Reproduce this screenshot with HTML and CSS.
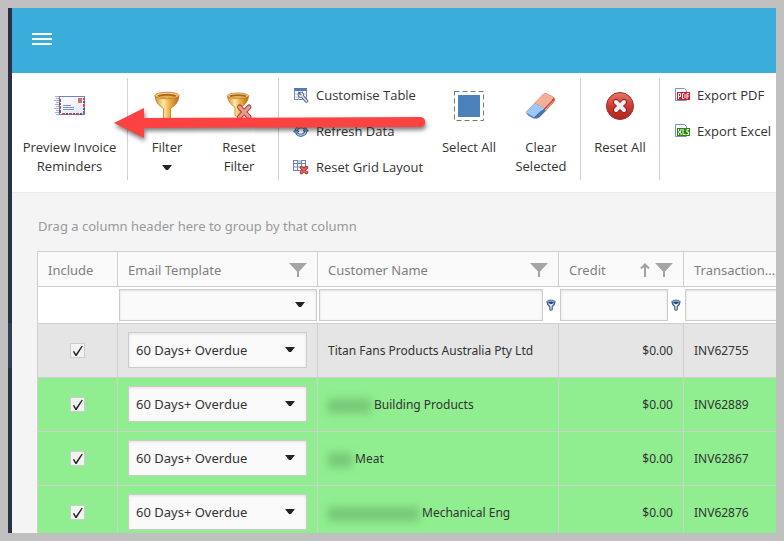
FILE: index.html
```html
<!DOCTYPE html>
<html lang="en">
<head>
    <meta charset="UTF-8">
    <meta name="viewport" content="width=device-width, initial-scale=1.0">
    <title>Invoice Reminders</title>
    <link rel="stylesheet" href="styles.css">
</head>
<body>
    <!-- shared icons -->
    <svg class="sprite" aria-hidden="true">
        <defs>
            <linearGradient id="gold" x1="0" x2="1" y1="0" y2="0">
                <stop offset="0" stop-color="#d58a2a"/>
                <stop offset="0.35" stop-color="#ffe9a6"/>
                <stop offset="0.6" stop-color="#eeb04a"/>
                <stop offset="1" stop-color="#b9690f"/>
            </linearGradient>
            <linearGradient id="red" x1="0" x2="0" y1="0" y2="1">
                <stop offset="0" stop-color="#e8796c"/>
                <stop offset="0.5" stop-color="#cf3a2d"/>
                <stop offset="1" stop-color="#b3241b"/>
            </linearGradient>
            <linearGradient id="paper" x1="0" x2="1" y1="0" y2="1">
                <stop offset="0" stop-color="#ffffff"/>
                <stop offset="1" stop-color="#dfe6f5"/>
            </linearGradient>
            <symbol id="goblet" viewBox="0 0 32 32">
                <path d="M4 5.500C4 11 7.500 15.500 12.500 18.500V28C14 29.500 18 29.500 19.500 28V18.500C24.500 15.500 28 11 28 5.500z" fill="url(#gold)" stroke="#b97a2a" stroke-width="0.800"/>
                <ellipse cx="16" cy="5.500" rx="12" ry="3.300" fill="#f9d58a" stroke="#b5752a" stroke-width="0.800"/>
                <ellipse cx="16" cy="5.800" rx="9.800" ry="2" fill="#a9671c"/>
                <path d="M8 6.800C12 8.300 20 8.300 24 6.800C20 5.300 12 5.300 8 6.800z" fill="#e8ad50"/>
            </symbol>
            <symbol id="funnel" viewBox="0 0 18 14">
                <path d="M0 0H18L10 8.500V14H8V8.500z" fill="#a4a4a4"/>
            </symbol>
            <symbol id="mini-funnel" viewBox="0 0 10 12">
                <path d="M1 3C1 5 2.500 6.500 3.800 7.500V10.500C4.300 11.500 5.700 11.500 6.200 10.500V7.500C7.500 6.500 9 5 9 3z" fill="#eef3f9" stroke="#3c5c88" stroke-width="1.200"/>
                <ellipse cx="5" cy="2.700" rx="4" ry="1.700" fill="#7f9cc2" stroke="#44648f" stroke-width="0.800"/>
                <path d="M2.500 3H7.500L5 5.500z" fill="#1f4478"/>
            </symbol>
            <symbol id="caret" viewBox="0 0 10 5">
                <path d="M0 0H10L6 5H4z" fill="#222"/>
            </symbol>
        </defs>
    </svg>

    <div class="app">
        <nav class="sidebar"><span class="sidebar-active"></span></nav>
        <div class="page">
            <header class="topbar">
                <button type="button" class="menu-button" aria-label="Menu"><i></i><i></i><i></i></button>
            </header>

            <div class="toolbar">
                <div class="group">
                    <button type="button" class="tool tool-wide">
                        <svg class="icon" viewBox="0 0 32 32">
                            <path d="M1 6.500H5M2 8.500H5M0 10.500H5M2 12.500H5M1 14.500H5M2 16.500H5M0 18.500H5M2 20.500H5M1 22.500H5M2 24.500H5" stroke="#a3b0d0" stroke-width="1"/>
                            <rect x="5.500" y="6.500" width="25" height="18" fill="url(#paper)" stroke="#6b84c0"/>
                            <path d="M6 9V12M6 16V19M8 24H11M15 24H18M22 24H25M30 21V24M30 14V17M30 8V10" stroke="#cf4a3f" stroke-width="2"/>
                            <path d="M6 13V15M6 20V23M12 24H14M19 24H21M26 24H28M30 18V20M30 11V13" stroke="#3f5fa8" stroke-width="2"/>
                            <rect x="24" y="8" width="4" height="5" fill="#dd6a5f"/>
                            <path d="M9 15.500H17M9 17.500H20M9 19.500H20" stroke="#7b93c6"/>
                        </svg>
                        <span>Preview Invoice Reminders</span>
                    </button>
                </div>

                <div class="group">
                    <button type="button" class="tool">
                        <svg class="icon"><use href="#goblet"/></svg>
                        <span>Filter</span>
                        <svg class="caret tool-caret"><use href="#caret"/></svg>
                    </button>
                    <button type="button" class="tool">
                        <svg class="icon" viewBox="0 0 32 32">
                            <use href="#goblet" x="1" y="1" width="28" height="28"/>
                            <path d="M16.500 17L26 27M26 17L16.500 27" stroke="#b5443a" stroke-width="5" stroke-linecap="round"/>
                            <path d="M16.500 17L26 27M26 17L16.500 27" stroke="#e79a8e" stroke-width="3" stroke-linecap="round"/>
                        </svg>
                        <span>Reset Filter</span>
                    </button>
                </div>

                <div class="group">
                    <div class="tool-list">
                        <button type="button" class="tool-small">
                            <svg class="icon-small" viewBox="0 0 16 16">
                                <rect x="1.500" y="1.500" width="12" height="11" fill="#fff" stroke="#7088b8"/>
                                <rect x="1" y="1" width="13" height="3" fill="#5a78b0"/>
                                <path d="M1 7H14M1 10H14M5.500 4V13M9.500 4V13" stroke="#9db0d4" stroke-width="0.800"/>
                                <path d="M9 9L13.500 14" stroke="#5a6678" stroke-width="3.500" stroke-linecap="round"/>
                                <circle cx="7.800" cy="7.800" r="2.800" fill="#dfe5ee" stroke="#5a6678"/>
                                <path d="M9 9L13.500 14" stroke="#d3dae5" stroke-width="1.800" stroke-linecap="round"/>
                                <path d="M5.500 5.500L7.800 7.800" stroke="#5a6678" stroke-width="1.600"/>
                            </svg>
                            Customise Table
                        </button>
                        <button type="button" class="tool-small">
                            <svg class="icon-small" viewBox="0 0 16 16">
                                <path d="M3 9C3 4 9 2 12 5.500" fill="none" stroke="#31578f" stroke-width="3"/>
                                <path d="M13 7C13 12 7 14 4 10.500" fill="none" stroke="#31578f" stroke-width="3"/>
                                <path d="M3 9C3 4 9 2 12 5.500M13 7C13 12 7 14 4 10.500" fill="none" stroke="#a9c6e8" stroke-width="1.400"/>
                                <path d="M0.500 8H6L3.300 11z" fill="#8fb2dc" stroke="#31578f" stroke-width="0.800"/>
                                <path d="M10 8H15.500L12.700 5z" fill="#8fb2dc" stroke="#31578f" stroke-width="0.800"/>
                            </svg>
                            Refresh Data
                        </button>
                        <button type="button" class="tool-small">
                            <svg class="icon-small" viewBox="0 0 16 16">
                                <rect x="0.500" y="1.500" width="12" height="10" fill="#fff" stroke="#6f86b5"/>
                                <rect x="4" y="1" width="5" height="4" fill="#b9d2f3"/>
                                <path d="M0 4.500H13M0 8H13M4.500 1V12M8.500 1V12" stroke="#6f86b5"/>
                                <path d="M8.500 8.500L13.500 13.500M13.500 8.500L8.500 13.500" stroke="#b52d25" stroke-width="3.500" stroke-linecap="round"/>
                                <path d="M8.500 8.500L13.500 13.500M13.500 8.500L8.500 13.500" stroke="#ec6e60" stroke-width="1.500" stroke-linecap="round"/>
                            </svg>
                            Reset Grid Layout
                        </button>
                    </div>
                    <button type="button" class="tool">
                        <svg class="icon" viewBox="0 0 32 32">
                            <rect x="1.500" y="1.500" width="29" height="29" fill="none" stroke="#777" stroke-dasharray="5 3"/>
                            <rect x="5" y="5" width="22" height="22" fill="#4b82bb"/>
                        </svg>
                        <span>Select All</span>
                    </button>
                    <button type="button" class="tool">
                        <svg class="icon" viewBox="0 0 32 32">
                            <path d="M1.500 21.500L18.500 4C19.500 3 20.500 3 21.500 3.500L29 7.500C30 8.500 30 10 29 12L15 26.500C13 28.500 11 28.500 8 28L3 25C1 23.500 1 22.500 1.500 21.500z" fill="#d1432c" stroke="#b9816f" stroke-width="0.500"/>
                            <path d="M9.500 13L18.500 4C19.500 3 20.500 3 21.500 3.500L29 7.500L19 18z" fill="#f4ae97"/>
                            <path d="M1.500 21.500L9.500 13L19 18L9.500 27C8.500 28 3.500 25.500 2.500 24.500C1 23 1 22.500 1.500 21.500z" fill="#9cc6f3"/>
                            <path d="M19 18L20.500 21L15 26.500C13 28.500 10.500 28.500 8.500 28z" fill="#3a78c2"/>
                            <path d="M2 23L9 27L8 28.300L3 25.200z" fill="#4f8fdb"/>
                            <path d="M26.500 10L16.500 20.500M28.500 11L20 20" fill="none" stroke="#f6d5cc" stroke-width="0.800"/>
                        </svg>
                        <span>Clear Selected</span>
                    </button>
                </div>

                <div class="group">
                    <button type="button" class="tool">
                        <svg class="icon" viewBox="0 0 32 32">
                            <circle cx="16" cy="16" r="13.500" fill="url(#red)" stroke="#9c2f28"/>
                            <path d="M12 12L20 20M20 12L12 20" stroke="#8c2a25" stroke-width="6" stroke-linecap="round"/>
                            <path d="M12 12L20 20M20 12L12 20" stroke="#f0eef3" stroke-width="4" stroke-linecap="round"/>
                        </svg>
                        <span>Reset All</span>
                    </button>
                </div>

                <div class="group">
                    <div class="tool-list">
                        <button type="button" class="tool-small">
                            <svg class="icon-small" viewBox="0 0 16 16">
                                <path d="M1.500 1.500H10.500L12.500 3.500V13.500H1.500z" fill="#f7f9fd" stroke="#7c90c4"/>
                                <rect x="3" y="5" width="13" height="8" fill="#c8202a"/>
                                <path d="M4.500 12V6.500H6.500V9.500H4.500M8.500 6.500V11.500H10L11 10.500V7.500L10 6.500zM13 12V6.500H15M13 9H15" fill="none" stroke="#fff"/>
                            </svg>
                            Export PDF
                        </button>
                        <button type="button" class="tool-small">
                            <svg class="icon-small" viewBox="0 0 16 16">
                                <path d="M1.500 1.500H10.500L12.500 3.500V13.500H1.500z" fill="#f7f9fd" stroke="#7c90c4"/>
                                <rect x="3" y="5" width="13" height="8" fill="#2e8b12"/>
                                <path d="M4.500 6V8L7 10V12M7 6V8L4.500 10V12M9 6V11.500H11.500M15 6.500H13V9H14.500V11.500H12.500" fill="none" stroke="#fff"/>
                            </svg>
                            Export Excel
                        </button>
                    </div>
                </div>

                <svg class="pointer" viewBox="0 0 320 40" aria-hidden="true">
                    <path d="M4 19L34 4V14L310 13C317 13 317 23 310 23L34 24V34z" fill="#fd4242"/>
                </svg>
            </div>

            <main class="grid-panel">
                <p class="group-hint">Drag a column header here to group by that column</p>
                <table class="grid">
                    <colgroup>
                        <col class="col-include">
                        <col class="col-template">
                        <col class="col-customer">
                        <col class="col-credit">
                        <col class="col-transaction">
                    </colgroup>
                    <thead>
                        <tr class="titles">
                            <th>Include</th>
                            <th><div class="title">Email Template <svg class="funnel"><use href="#funnel"/></svg></div></th>
                            <th><div class="title">Customer Name <svg class="funnel"><use href="#funnel"/></svg></div></th>
                            <th>
                                <div class="title">Credit
                                    <svg class="sort" viewBox="0 0 10 14"><path d="M5 14V2M1 5.500L5 1.500L9 5.500" fill="none" stroke="#a0a0a0" stroke-width="2"/></svg>
                                    <svg class="funnel"><use href="#funnel"/></svg>
                                </div>
                            </th>
                            <th>Transaction...</th>
                        </tr>
                        <tr class="filters">
                            <td></td>
                            <td>
                                <div class="picker">
                                    <select aria-label="Filter email template"><option></option></select>
                                    <svg class="caret"><use href="#caret"/></svg>
                                </div>
                            </td>
                            <td><div class="filter"><input type="text" aria-label="Filter customer name"><svg class="mini"><use href="#mini-funnel"/></svg></div></td>
                            <td><div class="filter"><input type="text" aria-label="Filter credit"><svg class="mini"><use href="#mini-funnel"/></svg></div></td>
                            <td><div class="filter"><input type="text" aria-label="Filter transaction"></div></td>
                        </tr>
                    </thead>
                    <tbody>
                        <tr class="focused">
                            <td class="center"><input type="checkbox" aria-label="Include INV62755" checked></td>
                            <td>
                                <div class="picker">
                                    <select aria-label="Template for INV62755"><option>60 Days+ Overdue</option></select>
                                    <svg class="caret"><use href="#caret"/></svg>
                                </div>
                            </td>
                            <td>Titan Fans Products Australia Pty Ltd</td>
                            <td class="amount">$0.00</td>
                            <td>INV62755</td>
                        </tr>
                        <tr>
                            <td class="center"><input type="checkbox" aria-label="Include INV62889" checked></td>
                            <td>
                                <div class="picker">
                                    <select aria-label="Template for INV62889"><option>60 Days+ Overdue</option></select>
                                    <svg class="caret"><use href="#caret"/></svg>
                                </div>
                            </td>
                            <td><span class="hidden-name medium"></span>Building Products</td>
                            <td class="amount">$0.00</td>
                            <td>INV62889</td>
                        </tr>
                        <tr>
                            <td class="center"><input type="checkbox" aria-label="Include INV62867" checked></td>
                            <td>
                                <div class="picker">
                                    <select aria-label="Template for INV62867"><option>60 Days+ Overdue</option></select>
                                    <svg class="caret"><use href="#caret"/></svg>
                                </div>
                            </td>
                            <td><span class="hidden-name short"></span>Meat</td>
                            <td class="amount">$0.00</td>
                            <td>INV62867</td>
                        </tr>
                        <tr>
                            <td class="center"><input type="checkbox" aria-label="Include INV62876" checked></td>
                            <td>
                                <div class="picker">
                                    <select aria-label="Template for INV62876"><option>60 Days+ Overdue</option></select>
                                    <svg class="caret"><use href="#caret"/></svg>
                                </div>
                            </td>
                            <td><span class="hidden-name long"></span>Mechanical Eng</td>
                            <td class="amount">$0.00</td>
                            <td>INV62876</td>
                        </tr>
                    </tbody>
                </table>
            </main>
        </div>
    </div>
</body>
</html>
```
FILE: styles.css
```css
* {
    box-sizing: border-box;
}

body {
    margin: 0;
    padding: 8px;
    height: 100vh;
    background-color: #c0c0c0;
    font-family: "Open Sans", "Noto Sans", sans-serif;
    font-size: 13px;
    color: #333;
    overflow: hidden;
}

button,
input,
select {
    font: inherit;
    color: inherit;
    margin: 0;
}

svg {
    flex-shrink: 0;
}

.sprite {
    position: absolute;
    width: 0;
    height: 0;
}

.app {
    display: flex;
    height: 100%;
    overflow: hidden;
}

.sidebar {
    flex: 0 0 4px;
    padding-top: 315px;
    background-color: #2a3045;
}

.sidebar-active {
    display: block;
    height: 45px;
    background-color: #363d57;
}

.page {
    flex: 1;
    min-width: 0;
    display: flex;
    flex-direction: column;
    background-color: #f4f4f4;
}

.topbar {
    display: flex;
    align-items: center;
    height: 65px;
    flex-shrink: 0;
    padding: 0 20px 4px;
    background-color: #3badda;
}

.menu-button {
    display: flex;
    flex-direction: column;
    gap: 3px;
    width: 20px;
    padding: 0;
    border: none;
    background: none;
    cursor: pointer;
}

.menu-button i {
    height: 2px;
    background-color: #fff;
}

/* toolbar */
.toolbar {
    position: relative;
    display: flex;
    flex-shrink: 0;
    padding: 5px 0 12px;
    background-color: #fff;
    border-bottom: 1px solid #ececec;
}

.group {
    display: flex;
    flex-shrink: 0;
    height: 102px;
    padding: 0 3px;
    border-right: 1px solid #d0d0d0;
}

.group:last-of-type {
    border-right: none;
}

.tool,
.tool-small {
    display: flex;
    align-items: center;
    padding: 0;
    border: none;
    background: none;
    line-height: 19px;
    cursor: pointer;
}

.tool {
    flex-direction: column;
    width: 72px;
    padding: 12px 6px 0;
}

.tool-wide {
    width: 109px;
}

.icon {
    width: 32px;
    height: 32px;
    margin-bottom: 16px;
}

.caret {
    width: 10px;
    height: 5px;
}

.tool-caret {
    margin-top: 8px;
}

.tool-list {
    display: flex;
    flex-direction: column;
    gap: 12px;
    width: 151px;
    padding: 5px 0 0 11px;
}

.tool-small {
    gap: 7px;
    height: 24px;
    white-space: nowrap;
}

.icon-small {
    width: 16px;
    height: 16px;
}

.pointer {
    position: absolute;
    left: 98px;
    top: 31px;
    width: 320px;
    height: 40px;
    filter: drop-shadow(1px 3px 2px rgba(0, 0, 0, 0.5));
    pointer-events: none;
}

/* grid */
.grid-panel {
    flex: 1;
    min-height: 0;
    padding-left: 25px;
    overflow: hidden;
    font-family: "Noto Sans", "Open Sans", sans-serif;
}

.group-hint {
    margin: 0;
    padding: 4px 1px 0;
    height: 58px;
    line-height: 58px;
    color: #999;
}

.grid {
    width: 100%;
    min-width: 797px;
    table-layout: fixed;
    border-collapse: separate;
    border-spacing: 0;
    border-left: 1px solid #d0d0d0;
    border-top: 1px solid #d0d0d0;
    font-size: 12px;
}

.col-include {
    width: 80px;
}

.col-template {
    width: 200px;
}

.col-customer {
    width: 241px;
}

.col-credit {
    width: 125px;
}

.grid th,
.grid td {
    padding: 0 10px;
    border-right: 1px solid #d0d0d0;
    border-bottom: 1px solid #d0d0d0;
    text-align: left;
    white-space: nowrap;
}

.titles {
    height: 35px;
    background-color: #fafafa;
}

.grid th {
    padding-top: 2px;
    color: #808080;
    font-size: 13px;
    font-weight: normal;
}

.title {
    display: flex;
    align-items: center;
    gap: 5px;
}

.title svg:first-of-type {
    margin-left: auto;
}

.funnel {
    width: 18px;
    height: 14px;
}

.sort {
    width: 10px;
    height: 14px;
}

.filters {
    height: 37px;
    background-color: #fff;
}

.grid .filters td {
    padding: 0 1px;
    border-right: none;
}

.filter {
    display: flex;
    align-items: center;
    gap: 3px;
    padding-right: 2px;
}

.filter input,
.picker select {
    width: 100%;
    min-width: 0;
    height: 32px;
    padding: 0 7px;
    appearance: none;
    border: 1px solid #ccc;
    border-radius: 0;
    background-color: #fafafa;
    box-shadow: inset 0 1px 3px rgba(0, 0, 0, 0.1);
}

.mini {
    width: 10px;
    height: 12px;
}

.picker {
    display: grid;
    align-items: center;
}

.picker select,
.picker .caret {
    grid-area: 1 / 1;
}

.picker .caret {
    justify-self: end;
    margin: 0 12px 2px 0;
    pointer-events: none;
}

tbody tr {
    height: 54px;
    background-color: #90ee90;
}

tbody .focused {
    background-color: #e5e5e5;
}

tbody .picker {
    padding-bottom: 1px;
}

tbody .picker select {
    height: 36px;
    font-size: 13px;
}

.grid .center {
    text-align: center;
}

.grid .amount {
    text-align: right;
}

input[type="checkbox"] {
    display: block;
    width: 15px;
    height: 15px;
    margin: 0 auto;
    appearance: none;
    border: 1px solid #ccc;
    background-color: #f2f2f2;
}

input[type="checkbox"]:checked::before {
    content: "";
    display: block;
    height: 13px;
    background-color: #222;
    clip-path: polygon(14% 58%, 24% 54%, 38% 76%, 82% 14%, 91% 17%, 43% 92%, 34% 92%);
}

.hidden-name {
    display: inline-block;
    height: 14px;
    margin-right: 3px;
    vertical-align: middle;
    background-color: rgba(80, 140, 80, 0.4);
    filter: blur(4px);
}

.hidden-name.short {
    width: 24px;
}

.hidden-name.medium {
    width: 43px;
}

.hidden-name.long {
    width: 91px;
}
```
